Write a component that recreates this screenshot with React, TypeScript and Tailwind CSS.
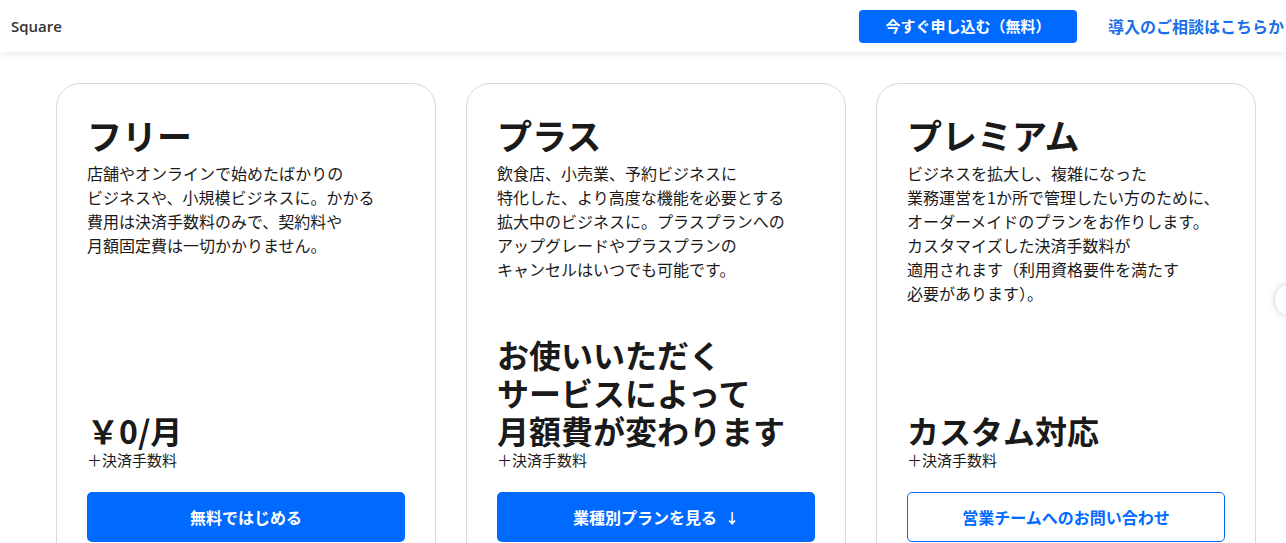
import React from 'react';

const font = { fontFamily: '"Noto Sans CJK JP", "Noto Sans", sans-serif' };

interface Plan {
  name: string;
  lines: string[];
  price: string[];
  cta: string;
  outline?: boolean;
  arrow?: boolean;
}

const plans: Plan[] = [
  {
    name: 'フリー',
    lines: [
      '店舗やオンラインで始めたばかりの',
      'ビジネスや、小規模ビジネスに。かかる',
      '費用は決済手数料のみで、契約料や',
      '月額固定費は一切かかりません。',
    ],
    price: ['￥0/月'],
    cta: '無料ではじめる',
  },
  {
    name: 'プラス',
    lines: [
      '飲食店、小売業、予約ビジネスに',
      '特化した、より高度な機能を必要とする',
      '拡大中のビジネスに。プラスプランへの',
      'アップグレードやプラスプランの',
      'キャンセルはいつでも可能です。',
    ],
    price: ['お使いいただく', 'サービスによって', '月額費が変わります'],
    cta: '業種別プランを見る',
    arrow: true,
  },
  {
    name: 'プレミアム',
    lines: [
      'ビジネスを拡大し、複雑になった',
      '業務運営を1か所で管理したい方のために、',
      'オーダーメイドのプランをお作りします。',
      'カスタマイズした決済手数料が',
      '適用されます（利用資格要件を満たす',
      '必要があります）。',
    ],
    price: ['カスタム対応'],
    cta: '営業チームへのお問い合わせ',
    outline: true,
  },
];

function PlanCard({ plan }: { plan: Plan }) {
  return (
    <div className="flex h-[490px] w-[380px] shrink-0 flex-col rounded-[24px] border border-[#dadada] bg-white px-[30px] pb-[30px] pt-[28px]">
      <h2 className="text-[35px] font-bold leading-[46px] text-[#1a1a1a]">{plan.name}</h2>
      <p className="mt-[3px] text-[16px] leading-[24px] text-[#1a1a1a]">
        {plan.lines.map((l, i) => (
          <span key={i} className="block whitespace-nowrap">{l}</span>
        ))}
      </p>
      <div className="mt-auto">
        <div className="text-[32px] font-bold leading-[38px] text-[#1a1a1a]">
          {plan.price.map((l, i) => (
            <span key={i} className="block whitespace-nowrap">{l}</span>
          ))}
        </div>
        <div className="text-[15px] leading-[22px] text-[#1a1a1a]">＋決済手数料</div>
        <button
          className={`mt-[21px] flex h-[50px] w-full items-center justify-center gap-2 rounded-[5px] text-[16px] font-bold ${
            plan.outline
              ? 'border border-[#006aff] bg-white text-[#006aff]'
              : 'bg-[#006aff] text-white'
          }`}
        >
          {plan.cta}
          {plan.arrow && <span className="text-[14px]">↓</span>}
        </button>
      </div>
    </div>
  );
}

export default function App() {
  return (
    <div className="relative h-[543px] w-full overflow-hidden bg-white" style={font}>
      <header className="relative z-10 flex h-[52px] items-center bg-white pl-[11px] shadow-[0_2px_8px_rgba(0,0,0,0.09)]">
        <span className="text-[15px] font-semibold text-[#333]" style={{ fontFamily: '"Open Sans", sans-serif' }}>Square</span>
        <div className="ml-auto flex items-center gap-[31px] whitespace-nowrap">
          <button className="h-[33px] w-[218px] rounded-[4px] bg-[#006aff] text-[15px] font-bold text-white">
            今すぐ申し込む（無料）
          </button>
          <a className="mr-[-14px] text-[16px] font-bold text-[#1a6fe8]">導入のご相談はこちらから</a>
        </div>
      </header>
      <main className="flex gap-[30px] pl-[56px] pt-[31px]">
        {plans.map(p => (
          <PlanCard key={p.name} plan={p} />
        ))}
      </main>
      <div className="absolute right-[-22px] top-[283px] h-[34px] w-[34px] rounded-full border border-[#d6e4f5] bg-white shadow-[0_0_6px_rgba(0,0,0,0.15)]" />
    </div>
  );
}
